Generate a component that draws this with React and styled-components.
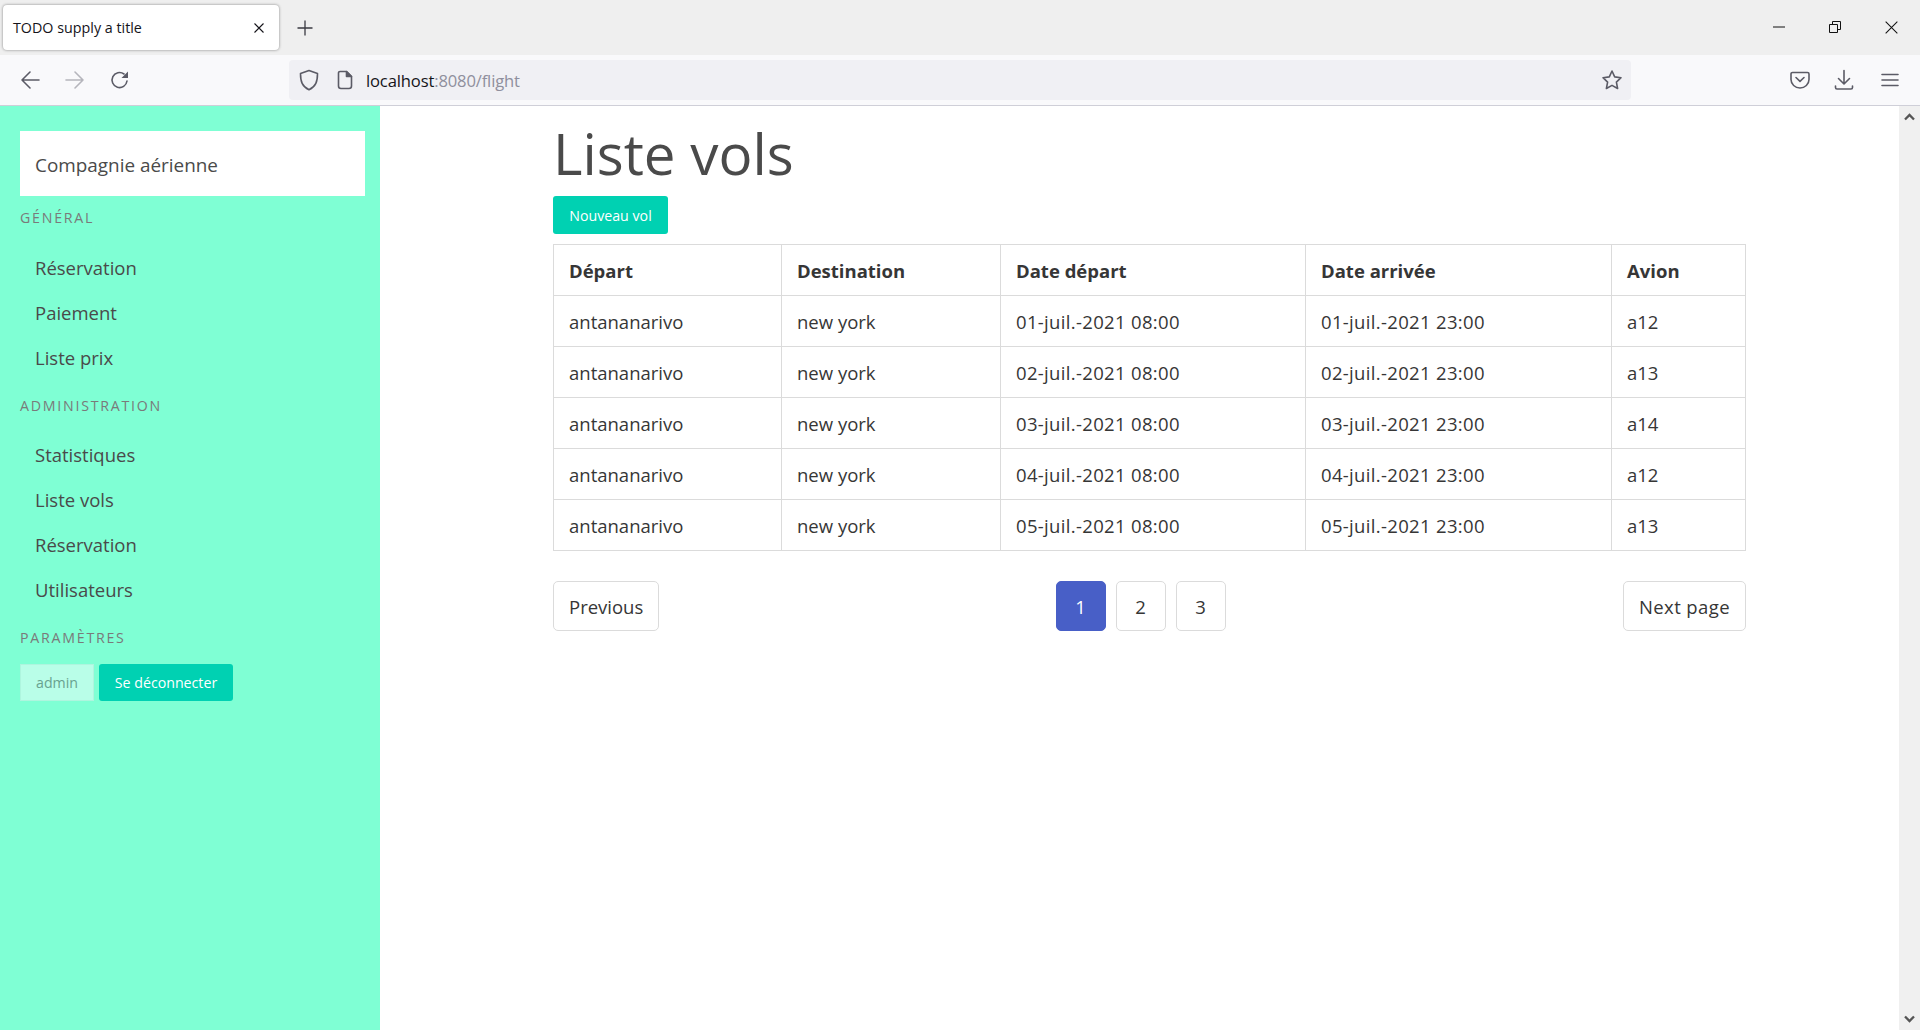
import React from "react";
import styled, { createGlobalStyle } from "styled-components";

const Global = createGlobalStyle`
  html, body { margin: 0; padding: 0; height: 100%; overflow: hidden; background: #fff; }
  body { font-family: "Open Sans", "Noto Sans", sans-serif; color: #4a4a4a; }
  * { box-sizing: border-box; }
`;

const Page = styled.div`display: flex; flex-direction: column; height: 1030px; overflow: hidden;`;
const TabBar = styled.div`display: flex; align-items: flex-start; height: 55px; background: #efefef; padding: 5px 0 0 3px; color: #222;`;
const Tab = styled.div`
  display: flex; align-items: center; justify-content: space-between;
  width: 276px; height: 45px; padding: 0 15px 0 10px; background: #fff; border-radius: 4px;
  box-shadow: 0 0 3px rgba(0,0,0,.45); font-size: 14.3px; color: #15141a;
`;
const TabPlus = styled.div`display: flex; margin: 15px auto 0 18px;`;
const WinControls = styled.div`display: flex; align-items: center; height: 44px;`;
const WinButton = styled.div`display: flex; width: 56.5px; justify-content: center;`;
const ToolBar = styled.div`
  display: flex; align-items: center; height: 51px; padding: 0 21px 1px 20px; background: #f9f9fb;
  border-bottom: 1px solid #cfcfd8;
`;
const NavIcons = styled.div`display: flex; align-items: center; gap: 25px; width: 269px;`;
const UrlBar = styled.div`
  display: flex; align-items: center; width: 1342px; height: 40px; padding: 0 8px 0 10px;
  background: #f0f0f4; border-radius: 4px;
`;
const UrlGap = styled.span`width: 18px;`;
const UrlText = styled.div`font-size: 16.6px; letter-spacing: -0.15px; margin-left: 13px; padding-top: 2px; flex: 1; color: #15141a;`;
const UrlDim = styled.span`color: #8f8f9d;`;
const ToolIcons = styled.div`display: flex; align-items: center; gap: 24px; margin-left: auto;`;

const Body = styled.div`flex: 1; display: flex; min-height: 0;`;
const Sidebar = styled.aside`width: 380px; flex: none; background: #7fffd4; padding: 25px 15px 0 20px;`;
const Brand = styled.div`
  display: flex; align-items: center; height: 65px; padding: 2px 0 0 15px; background: #fff;
  font-size: 18.9px; color: #4a4a4a;
`;
const MenuLabel = styled.p`
  margin: ${p => (p.$first ? "11px" : "15px")} 0 ${p => (p.$tight ? "14px" : "15px")};
  font-size: 14.2px; line-height: 22.5px; letter-spacing: 1.75px; text-transform: uppercase; color: #7a7a7a;
`;
const MenuList = styled.ul`list-style: none; margin: 0; padding: 0;`;
const MenuItem = styled.li`
  height: 45px; line-height: 45px; padding-left: 15px; font-size: 18.5px; color: #4a4a4a;
`;
const UserRow = styled.div`display: flex; gap: 5px;`;
const AdminTag = styled.div`
  display: flex; align-items: center; justify-content: center; width: 74px; height: 37px;
  background: #b9fee8; border: 1px solid #aef5de; font-size: 14.2px; color: #68a28f;
`;
const PrimaryButton = styled.div`
  display: inline-flex; align-items: center; justify-content: center; height: ${p => p.$h}px; width: ${p => p.$w}px;
  background: #00d1b2; color: #fff; border-radius: 3px; font-size: 14.2px;
`;

const Main = styled.main`flex: 1; padding: 0 153px 0 173px; min-width: 0;`;
const Title = styled.h1`
  margin: 0; height: 90px; padding-top: 8px; font-size: 56.5px; line-height: 80px; font-weight: 400; color: #4a4a4a;
`;
const Table = styled.table`
  border-collapse: collapse; table-layout: fixed; width: 1192px; margin-top: 10px; font-size: 18.5px; color: #363636;
`;
const Th = styled.th`
  height: 51px; padding: 0 15px; border: 1px solid #dbdbdb; text-align: left; font-weight: 700; color: #363636;
`;
const Td = styled.td`
  height: 51px; padding: 0 15px; border: 1px solid #dbdbdb;
  letter-spacing: ${p => p.$date ? "0.33px" : "0"};
`;
const Pagination = styled.nav`display: flex; align-items: center; justify-content: space-between; margin-top: 30px; width: 1193px;`;
const PageList = styled.div`display: flex; gap: 10px; margin-left: -1px;`;
const PageLink = styled.div`
  display: flex; align-items: center; justify-content: center; height: 50px; min-width: 50px; padding: 0 15px;
  border: 1px solid ${p => p.$active ? "#485fc7" : "#dbdbdb"}; border-radius: 5px;
  background: ${p => p.$active ? "#485fc7" : "#fff"}; color: ${p => p.$active ? "#fff" : "#363636"};
  font-size: 18.5px; letter-spacing: ${p => p.$wide ? "0.4px" : "0"};
`;
const Scrollbar = styled.div`
  width: 21px; flex: none; background: #f0f0f0; display: flex; flex-direction: column; justify-content: space-between;
  align-items: center; padding: 7px 0;
`;

const strokeProps = { fill: "none", stroke: "#5b5b66", strokeWidth: 1.6, strokeLinecap: "round", strokeLinejoin: "round" };

const Back = () => <svg width="20" height="20" viewBox="0 0 20 20" {...strokeProps}><path d="M19 10H2M10 2l-8 8 8 8" /></svg>;
const Forward = () => <svg width="20" height="20" viewBox="0 0 20 20" {...strokeProps} stroke="#b5b5bc"><path d="M1 10h17M10 2l8 8-8 8" /></svg>;
const Reload = () => <svg width="20" height="20" viewBox="0 0 20 20" {...strokeProps}><path d="M17 11a7.5 7.5 0 1 1-3-7" /><path d="M18 1.5V8h-6.5z" fill="#5b5b66" stroke="none" /></svg>;
const Shield = () => <svg width="20" height="22" viewBox="0 0 20 22" {...strokeProps}><path d="M10 1.5 18.5 4.4c0 8-1.6 13-8.5 16.4C3.1 17.4 1.5 12.4 1.5 4.4z" /></svg>;
const Doc = () => <svg width="16" height="20" viewBox="0 0 16 20" {...strokeProps}><path d="M3 1.5h6.5l5 5V16a2.5 2.5 0 0 1-2.5 2.5H4A2.5 2.5 0 0 1 1.5 16V3A1.5 1.5 0 0 1 3 1.5z" /><path d="M9.5 1.5v5h5z" fill="#5b5b66" /></svg>;
const Star = () => <svg width="22" height="22" viewBox="0 0 22 22" {...strokeProps}><path d="M11 2l2.7 5.9 6.3.8-4.6 4.4 1.2 6.4-5.6-3.1-5.6 3.1 1.2-6.4L2 8.7l6.300-.8z" /></svg>;
const Pocket = () => <svg width="20" height="18" viewBox="0 0 20 18" {...strokeProps}><path d="M2.500 1.500h15A1.500 1.500 0 0 1 19 3v5.500a9 8.500 0 0 1-18 0V3a1.500 1.500 0 0 1 1.500-1.500z" /><path d="M6 6.500l4 3.800 4-3.800" /></svg>;
const Download = () => <svg width="23" height="22" viewBox="0 0 23 22" {...strokeProps}><path d="M10 1.500v13M4.500 9.500l5.500 5.500 5.500-5.500" /><path d="M1.500 17v1.500a1.500 1.500 0 0 0 1.500 1.500h14a1.500 1.500 0 0 0 1.500-1.500V17" /></svg>;
const Burger = () => <svg width="18" height="14" viewBox="0 0 18 14" {...strokeProps}><path d="M1 1.500h16M1 7h16M1 12.500h16" /></svg>;
const Close = ({ s = 10, c = "#15141a", w = 1.1 }) => <svg width={s} height={s} viewBox="0 0 10 10" fill="none" stroke={c} strokeWidth={w}><path d="M.5.5l9 9M9.500.5l-9 9" /></svg>;
const Plus = () => <svg width="16" height="16" viewBox="0 0 16 16" fill="none" stroke="#3a3a42" strokeWidth="1.300"><path d="M8 .5v15M.5 8h15" /></svg>;
const Minimize = () => <svg width="12" height="2" viewBox="0 0 12 2" stroke="#111"><path d="M0 1h12" /></svg>;
const Restore = () => <svg width="12" height="12" viewBox="0 0 12 12" fill="none" stroke="#111"><path d="M.5 3.500h8v8h-8zM3.500 3.500v-3h8v8h-3" /></svg>;
const ChevronUp = () => <svg width="11" height="8" viewBox="0 0 11 8" fill="none" stroke="#555" strokeWidth="2.300"><path d="M1 6.500l4.500-4.500 4.500 4.500" /></svg>;
const ChevronDown = () => <svg width="11" height="8" viewBox="0 0 11 8" fill="none" stroke="#555" strokeWidth="2.300"><path d="M1 1.500l4.500 4.500 4.500-4.500" /></svg>;

const rows = [
  ["01", "a12"], ["02", "a13"], ["03", "a14"], ["04", "a12"], ["05", "a13"],
];
const colWidths = [228, 219, 305, 306, 134];

export default function App() {
  return (
    <Page>
      <Global />
      <TabBar>
        <Tab>TODO supply a title<Close /></Tab>
        <TabPlus><Plus /></TabPlus>
        <WinControls>
          <WinButton><Minimize /></WinButton>
          <WinButton><Restore /></WinButton>
          <WinButton><Close s={13} c="#111" w={0.8} /></WinButton>
        </WinControls>
      </TabBar>
      <ToolBar>
        <NavIcons><Back /><Forward /><Reload /></NavIcons>
        <UrlBar>
          <Shield />
          <UrlGap />
          <Doc />
          <UrlText>localhost<UrlDim>:8080/flight</UrlDim></UrlText>
          <Star />
        </UrlBar>
        <ToolIcons><Pocket /><Download /><Burger /></ToolIcons>
      </ToolBar>
      <Body>
        <Sidebar>
          <Brand>Compagnie aérienne</Brand>
          <MenuLabel $first>Général</MenuLabel>
          <MenuList>
            <MenuItem>Réservation</MenuItem>
            <MenuItem>Paiement</MenuItem>
            <MenuItem>Liste prix</MenuItem>
          </MenuList>
          <MenuLabel>Administration</MenuLabel>
          <MenuList>
            <MenuItem>Statistiques</MenuItem>
            <MenuItem>Liste vols</MenuItem>
            <MenuItem>Réservation</MenuItem>
            <MenuItem>Utilisateurs</MenuItem>
          </MenuList>
          <MenuLabel $tight>Paramètres</MenuLabel>
          <UserRow>
            <AdminTag>admin</AdminTag>
            <PrimaryButton $w={134} $h={37}>Se déconnecter</PrimaryButton>
          </UserRow>
        </Sidebar>
        <Main>
          <Title>Liste vols</Title>
          <PrimaryButton $w={115} $h={38}>Nouveau vol</PrimaryButton>
          <Table>
            <colgroup>{colWidths.map(w => <col key={w} width={w} />)}</colgroup>
            <thead>
              <tr><Th>Départ</Th><Th>Destination</Th><Th>Date départ</Th><Th>Date arrivée</Th><Th>Avion</Th></tr>
            </thead>
            <tbody>
              {rows.map(([d, a]) => (
                <tr key={d}>
                  <Td>antananarivo</Td>
                  <Td>new york</Td>
                  <Td $date>{d}-juil.-2021 08:00</Td>
                  <Td $date>{d}-juil.-2021 23:00</Td>
                  <Td>{a}</Td>
                </tr>
              ))}
            </tbody>
          </Table>
          <Pagination>
            <PageLink>Previous</PageLink>
            <PageList>
              <PageLink $active>1</PageLink>
              <PageLink>2</PageLink>
              <PageLink>3</PageLink>
            </PageList>
            <PageLink $wide>Next page</PageLink>
          </Pagination>
        </Main>
        <Scrollbar><ChevronUp /><ChevronDown /></Scrollbar>
      </Body>
    </Page>
  );
}
